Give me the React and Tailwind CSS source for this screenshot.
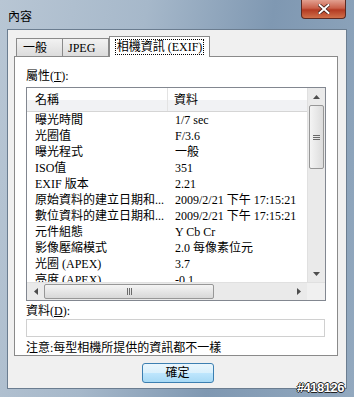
import React from 'react';

const font = { fontFamily: '"Liberation Serif", "Noto Sans CJK TC", serif' };

const rows = [
  ['曝光時間', '1/7 sec'],
  ['光圈值', 'F/3.6'],
  ['曝光程式', '一般'],
  ['ISO值', '351'],
  ['EXIF 版本', '2.21'],
  ['原始資料的建立日期和...', '2009/2/21 下午 17:15:21'],
  ['數位資料的建立日期和...', '2009/2/21 下午 17:15:21'],
  ['元件組態', 'Y Cb Cr'],
  ['影像壓縮模式', '2.0 每像素位元'],
  ['光圈 (APEX)', '3.7'],
  ['亮度 (APEX)', '-0.1'],
];

function Arrow({ dir }) {
  const pts = {
    up: '0,4 3.5,0 7,4',
    down: '0,0 3.5,4 7,0',
    left: '4,0 0,3.5 4,7',
    right: '0,0 4,3.5 0,7',
  }[dir];
  const vertical = dir === 'up' || dir === 'down';
  return (
    <svg width={vertical ? 7 : 4} height={vertical ? 4 : 7} viewBox={vertical ? '0 0 7 4' : '0 0 4 7'}>
      <polygon points={pts} fill="#4d4d4d" />
    </svg>
  );
}

export default function App() {
  return (
    <div
      className="relative w-[354px] h-[397px] flex flex-col px-[7px] pb-[8px] bg-[linear-gradient(100deg,#b8c6d4_0%,#a6b8ca_35%,#7f98b2_65%,#93a9bf_100%)] overflow-hidden"
      style={font}
    >
      {/* title bar */}
      <div className="h-[29px] flex items-start justify-between shrink-0">
        <span className="mt-[9px] ml-[1px] text-[12px] leading-[14px] text-black" style={{ fontFamily: '"Noto Sans CJK TC", sans-serif' }}>內容</span>
        <div className="w-[45px] h-[19px] mr-[1px] rounded-b-[4px] border border-t-0 border-[#5c2a22] bg-[linear-gradient(#e2a090_0%,#c9604a_45%,#b33a22_55%,#d0704a_100%)] flex items-center justify-center">
          <svg width="12" height="10" viewBox="0 0 12 10">
            <path d="M1.5 1 L10.5 9 M10.5 1 L1.5 9" stroke="#3c1a14" strokeWidth="3.4" strokeLinecap="square" />
            <path d="M1.5 1 L10.5 9 M10.5 1 L1.5 9" stroke="#fff" strokeWidth="2" strokeLinecap="square" />
          </svg>
        </div>
      </div>

      {/* client area */}
      <div className="flex-1 bg-[#f0f0f0] border border-[#6b7d90] flex flex-col px-[6px] pt-[5px]">
        {/* tabs */}
        <div className="flex items-end h-[21px] text-[12px] leading-[14px] text-black">
          <div className="ml-[2px] w-[47px] h-[18px] border border-b-0 border-[#8a8a8a] bg-[linear-gradient(#f2f2f2,#dcdcdc)] flex items-center pl-[6px]">一般</div>
          <div className="w-[46px] h-[18px] border border-b-0 border-l-0 border-[#8a8a8a] bg-[linear-gradient(#f2f2f2,#dcdcdc)] flex items-center pl-[5px]">JPEG</div>
          <div className="w-[101px] h-[21px] -mb-[1px] border border-b-0 border-[#8a8a8a] bg-white relative z-10 flex items-center justify-center">
            <span className="outline outline-1 outline-dotted outline-black px-[1px]">相機資訊 (EXIF)</span>
          </div>
        </div>

        {/* tab page */}
        <div className="w-[324px] h-[300px] border border-[#8a8a8a] bg-white flex flex-col px-[11px] text-[12px] leading-[14px] text-black">
          <div className="mt-[12px] h-[14px]">屬性(<span className="underline">T</span>):</div>

          {/* list view */}
          <div className="mt-[4px] w-[300px] h-[214px] border border-[#828790] flex flex-col">
            <div className="flex flex-1 min-h-0">
              <div className="flex-1 flex flex-col min-w-0 overflow-hidden">
                <div className="h-[24px] shrink-0 flex bg-[linear-gradient(#ffffff_0%,#ffffff_50%,#f1f2f4_51%,#f1f2f4_100%)] border-b border-[#d5d5d5]">
                  <div className="w-[141px] border-r border-[#e3e3e3] pl-[8px] flex items-center">名稱</div>
                  <div className="flex-1 pl-[6px] flex items-center">資料</div>
                </div>
                <div className="flex flex-col">
                  {rows.map(([k, v]) => (
                    <div key={k} className="h-[16px] flex items-center whitespace-nowrap">
                      <div className="w-[141px] pl-[8px]">{k}</div>
                      <div className="pl-[7px]">{v}</div>
                    </div>
                  ))}
                </div>
              </div>
              {/* vertical scrollbar */}
              <div className="w-[18px] shrink-0 bg-[#eaeaea] border-l border-[#e0e0e0] flex flex-col items-center">
                <div className="h-[17px] flex items-center justify-center"><Arrow dir="up" /></div>
                <div className="w-[15px] h-[64px] rounded-[2px] border border-[#979797] bg-[linear-gradient(90deg,#f4f4f4,#dcdcdc)] flex items-center justify-center">
                  <svg width="7" height="7" viewBox="0 0 7 7">
                    <path d="M0 1.5 H7 M0 3.5 H7 M0 5.5 H7" stroke="#6a6a6a" strokeWidth="1" />
                  </svg>
                </div>
                <div className="flex-1" />
                <div className="h-[17px] flex items-center justify-center"><Arrow dir="down" /></div>
              </div>
            </div>
            {/* horizontal scrollbar */}
            <div className="h-[18px] shrink-0 flex bg-[#eaeaea] border-t border-[#e0e0e0]">
              <div className="w-[17px] flex items-center justify-center"><Arrow dir="left" /></div>
              <div className="w-[170px] h-[15px] mt-[1px] rounded-[2px] border border-[#979797] bg-[linear-gradient(#f4f4f4,#d8d8d8)] flex items-center justify-center">
                <svg width="7" height="7" viewBox="0 0 7 7">
                  <path d="M1.5 0 V7 M3.5 0 V7 M5.5 0 V7" stroke="#6a6a6a" strokeWidth="1" />
                </svg>
              </div>
              <div className="flex-1" />
              <div className="w-[17px] flex items-center justify-center"><Arrow dir="right" /></div>
              <div className="w-[18px] bg-[#f0f0f0]" />
            </div>
          </div>

          <div className="mt-[3px] h-[14px]">資料(<span className="underline">D</span>):</div>
          <div className="mt-[1px] w-[299px] h-[19px] border border-[#d0d0d0] bg-white" />
          <div className="mt-[4px] h-[14px]">注意:每型相機所提供的資訊都不一樣</div>
        </div>

        {/* button */}
        <div className="flex justify-center mt-[7px] ml-[1px]">
          <div className="w-[72px] h-[20px] rounded-[3px] border border-[#3c7fb1] bg-[linear-gradient(#eaf6fd_0%,#d9f0fc_50%,#bee6fd_51%,#a7d9f5_100%)] flex items-center justify-center text-[12px] leading-[14px] text-black">確定</div>
        </div>
      </div>

      <div
        className="absolute right-[10px] bottom-[3px] text-[13px] leading-[13px] font-bold text-white tracking-[-0.5px]"
        style={{ fontFamily: '"Liberation Sans", sans-serif', textShadow: '1px 0 #222, -1px 0 #222, 0 1px #222, 0 -1px #222' }}
      >
        #418126
      </div>
    </div>
  );
}
